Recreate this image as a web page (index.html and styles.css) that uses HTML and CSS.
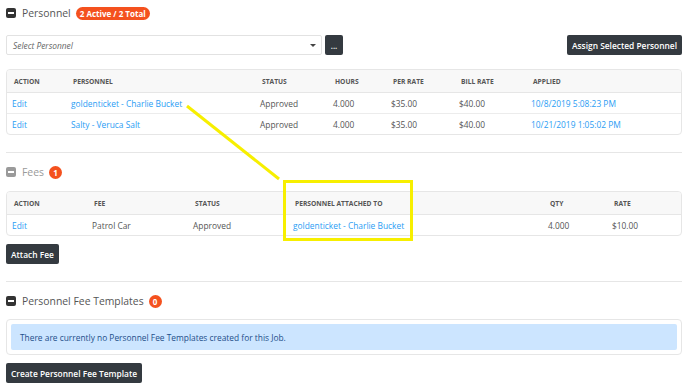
FILE: index.html
```html
<!DOCTYPE html>
<html lang="en">
<head>
  <meta charset="UTF-8" />
  <title>Job Personnel</title>
  <link rel="stylesheet" href="styles.css">
</head>
<body>

<div class="page">
  <div class="section-head">
    <span class="toggle"></span>
    <span class="section-title">Personnel</span>
    <span class="badge">2 Active / 2 Total</span>
  </div>

  <div class="picker-row">
    <div class="select">
      <span>Select Personnel</span>
      <span class="caret"></span>
    </div>
    <button class="btn btn-small">...</button>
    <div class="spacer"></div>
    <button class="btn">Assign Selected Personnel</button>
  </div>

  <div class="card personnel-card">
    <table class="grid personnel">
      <thead>
        <tr>
          <th>Action</th><th>Personnel</th><th>Status</th><th>Hours</th><th>Per Rate</th><th>Bill Rate</th><th>Applied</th>
        </tr>
      </thead>
      <tbody>
        <tr>
          <td><a href="#">Edit</a></td><td><a href="#">goldenticket - Charlie Bucket</a></td><td>Approved</td><td>4.000</td><td>$35.00</td><td>$40.00</td><td><a href="#">10/8/2019 5:08:23 PM</a></td>
        </tr>
        <tr>
          <td><a href="#">Edit</a></td><td><a href="#">Salty - Veruca Salt</a></td><td>Approved</td><td>4.000</td><td>$35.00</td><td>$40.00</td><td><a href="#">10/21/2019 1:05:02 PM</a></td>
        </tr>
      </tbody>
    </table>
  </div>

  <hr class="divider">

  <div class="section-head muted">
    <span class="toggle"></span>
    <span class="section-title">Fees</span>
    <span class="badge">1</span>
  </div>

  <div class="card">
    <table class="grid fees">
      <thead>
        <tr>
          <th>Action</th><th>Fee</th><th>Status</th><th>Personnel Attached To</th><th>Qty</th><th>Rate</th>
        </tr>
      </thead>
      <tbody>
        <tr>
          <td><a href="#">Edit</a></td><td>Patrol Car</td><td>Approved</td><td><a href="#">goldenticket - Charlie Bucket</a></td><td>4.000</td><td>$10.00</td>
        </tr>
      </tbody>
    </table>
  </div>

  <button class="btn btn-left">Attach Fee</button>

  <hr class="divider">

  <div class="section-head">
    <span class="toggle"></span>
    <span class="section-title">Personnel Fee Templates</span>
    <span class="badge">0</span>
  </div>

  <div class="card alert-wrap">
    <div class="alert">There are currently no Personnel Fee Templates created for this Job.</div>
  </div>

  <button class="btn btn-left btn-last">Create Personnel Fee Template</button>
</div>

<svg class="annotation" width="688" height="388" viewBox="0 0 688 388">
  <line x1="187" y1="106" x2="279" y2="179" stroke="#f7ef00" stroke-width="3"/>
  <rect x="284.5" y="181.5" width="127" height="58" fill="none" stroke="#f7ef00" stroke-width="3"/>
</svg>

</body>
</html>
```

FILE: styles.css
```css
html, body {
  margin: 0;
  padding: 0;
  background: #fff;
  font-family: "Open Sans", sans-serif;
  color: #555;
  font-size: 8.4px;
}

body {
  position: relative;
}

.page {
  padding: 0 6px;
  display: flex;
  flex-direction: column;
  align-items: stretch;
}

a {
  color: #2a9df4;
  text-decoration: none;
}

.section-head {
  display: flex;
  align-items: center;
  height: 26px;
}

.toggle {
  width: 10px;
  height: 10px;
  border-radius: 2px;
  background: #333;
  position: relative;
  margin-right: 6px;
}

.toggle::after {
  content: "";
  position: absolute;
  left: 2px;
  right: 2px;
  top: 4px;
  height: 2px;
  background: #fff;
}

.section-title {
  font-size: 10.4px;
  color: #555;
  margin-right: 5px;
}

.muted .toggle {
  background: #9a9a9a;
}

.muted .section-title {
  color: #9a9a9a;
}

.badge {
  background: #f4511e;
  color: #fff;
  font-weight: bold;
  font-size: 8px;
  border-radius: 7px;
  height: 13px;
  line-height: 13px;
  padding: 0 4px;
  min-width: 5px;
  text-align: center;
}

.picker-row {
  display: flex;
  align-items: center;
  margin-top: 9px;
  height: 20px;
}

.select {
  width: 303px;
  height: 18px;
  border: 1px solid #e2e2e2;
  border-radius: 2px;
  display: flex;
  align-items: center;
  justify-content: space-between;
  padding: 0 5px 0 6px;
  font-style: italic;
  color: #666;
  font-size: 8.4px;
}

.caret {
  width: 0;
  height: 0;
  border-left: 3px solid transparent;
  border-right: 3px solid transparent;
  border-top: 3px solid #444;
}

.spacer {
  flex: 1;
}

.btn {
  background: #343a40;
  color: #fff;
  border: none;
  border-radius: 2px;
  font-family: "Open Sans", sans-serif;
  font-weight: 600;
  font-size: 8.4px;
  height: 20px;
  padding: 0 5px;
  cursor: pointer;
}

.btn-small {
  width: 18px;
  padding: 0;
  margin-left: 3px;
  font-size: 8px;
}

.btn-left {
  align-self: flex-start;
}

.card {
  margin-top: 6px;
  border: 1px solid #e6e6e6;
  border-radius: 4px;
  overflow: hidden;
}

.personnel-card {
  margin-top: 14px;
}

.grid {
  width: 100%;
  border-collapse: collapse;
  table-layout: fixed;
}

.grid th {
  background: #f8f8f8;
  text-align: left;
  text-transform: uppercase;
  font-size: 6.7px;
  font-weight: bold;
  color: #555;
  height: 22px;
  padding: 0 7px;
  border-bottom: 1px solid #e6e6e6;
}

.grid td {
  height: 20px;
  padding: 0 5px;
  white-space: nowrap;
}

.grid tbody tr + tr td {
  border-top: 1px solid #ececec;
}

.personnel th:nth-child(1) { width: 45px; }
.personnel th:nth-child(2) { width: 175px; }
.personnel th:nth-child(3) { width: 59px; }
.personnel th:nth-child(4) { width: 44px; }
.personnel th:nth-child(5) { width: 54px; }
.personnel th:nth-child(6) { width: 58px; }

.fees th:nth-child(1) { width: 66px; }
.fees th:nth-child(2) { width: 87px; }
.fees th:nth-child(3) { width: 86px; }
.fees th:nth-child(4) { width: 241px; }
.fees th:nth-child(5) { width: 50px; }

.divider {
  border: none;
  border-top: 1px solid #e6e6e6;
  margin: 17px 0 6px;
  width: 100%;
}

.card + .btn {
  margin-top: 8px;
}

.alert-wrap {
  padding: 4px;
  margin-top: 5px;
}

.alert {
  background: #cce5ff;
  color: #1e4f8a;
  border-radius: 2px;
  height: 26px;
  display: flex;
  align-items: center;
  padding: 0 9px;
  font-size: 8.4px;
}

.btn-last {
  margin-top: 9px;
}

.annotation {
  position: absolute;
  left: 0;
  top: 0;
  pointer-events: none;
}
```
